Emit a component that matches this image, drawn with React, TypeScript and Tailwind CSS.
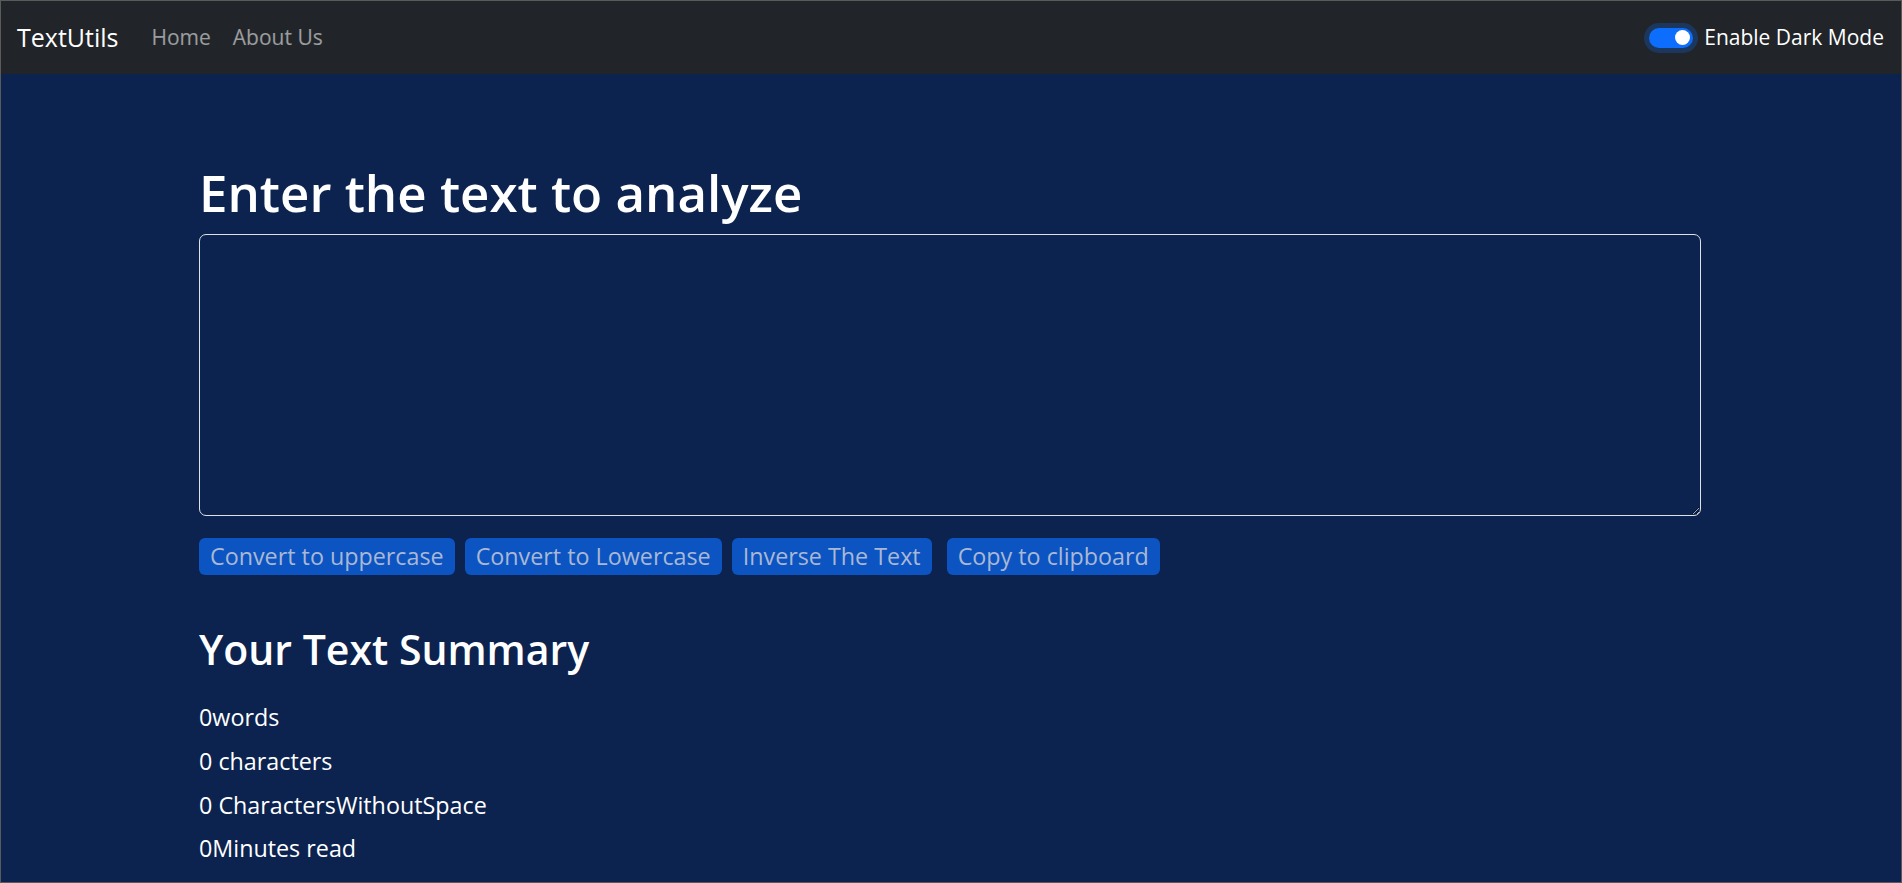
import { useState } from 'react';

export default function App() {
  const [text, setText] = useState('');
  const [dark, setDark] = useState(true);

  const words = text.split(/\s+/).filter(w => w.length > 0).length;
  const chars = text.length;
  const noSpace = text.replace(/\s/g, '').length;
  const minutes = 0.008 * words;

  return (
    <div
      className="h-[883px] overflow-hidden border border-[#5a5a5a] bg-[#0c2350] text-white"
      style={{ fontFamily: '"Open Sans", "Noto Sans", sans-serif' }}
    >
      {/* Navbar */}
      <nav className="h-[73px] bg-[#212529] flex items-center justify-between pl-4 pr-[17px]">
        <div className="flex items-center">
          <a className="text-[25px] text-white mr-[33px]">TextUtils</a>
          <div className="flex items-center gap-[22px] text-[21px] text-white/55">
            <a>Home</a>
            <a>About Us</a>
          </div>
        </div>

        <label className="flex items-center gap-[11px] text-[21px] text-white">
          <button
            onClick={() => setDark(!dark)}
            className="w-[44px] h-[20px] rounded-full bg-[#0d6efd] flex items-center justify-end pr-[3px] shadow-[0_0_0_5px_rgba(13,110,253,0.25)]"
          >
            <span className="w-[15px] h-[15px] rounded-full bg-white"></span>
          </button>
          Enable Dark Mode
        </label>
      </nav>

      {/* Form */}
      <div className="ml-[198px] w-[1502px] pt-[88px]">
        <h1 className="text-[51px] font-semibold leading-[1.2]">Enter the text to analyze</h1>
        <textarea
          value={text}
          onChange={e => setText(e.target.value)}
          className="block mt-[11px] w-full h-[282px] bg-transparent border border-[#dee2e6] rounded-[7px] outline-none p-3 text-[21px]"
        ></textarea>

        <div className="flex mt-[22px]">
          <button className="h-[37px] px-[11px] rounded-[6px] bg-[#0c54c2] text-[#a9b8d4] text-[23.3px] leading-[31px]">
            Convert to uppercase
          </button>
          <button className="h-[37px] px-[11px] ml-[10px] rounded-[6px] bg-[#0c54c2] text-[#a9b8d4] text-[23.3px] leading-[31px]">
            Convert to Lowercase
          </button>
          <button className="h-[37px] px-[11px] ml-[10px] rounded-[6px] bg-[#0c54c2] text-[#a9b8d4] text-[23.3px] leading-[31px]">
            Inverse The Text
          </button>
          <button className="h-[37px] px-[11px] ml-[15px] rounded-[6px] bg-[#0c54c2] text-[#a9b8d4] text-[23.3px] leading-[31px]">
            Copy to clipboard
          </button>
        </div>

        {/* Summary */}
        <h2 className="mt-[50px] text-[41px] font-semibold leading-[1.2]">Your Text Summary</h2>
        <div className="mt-[22px] text-[23.3px] leading-[43.7px]">
          <p>{words}words</p>
          <p>{chars} characters</p>
          <p>{noSpace} CharactersWithoutSpace</p>
          <p>{minutes}Minutes read</p>
        </div>
      </div>
    </div>
  );
}
